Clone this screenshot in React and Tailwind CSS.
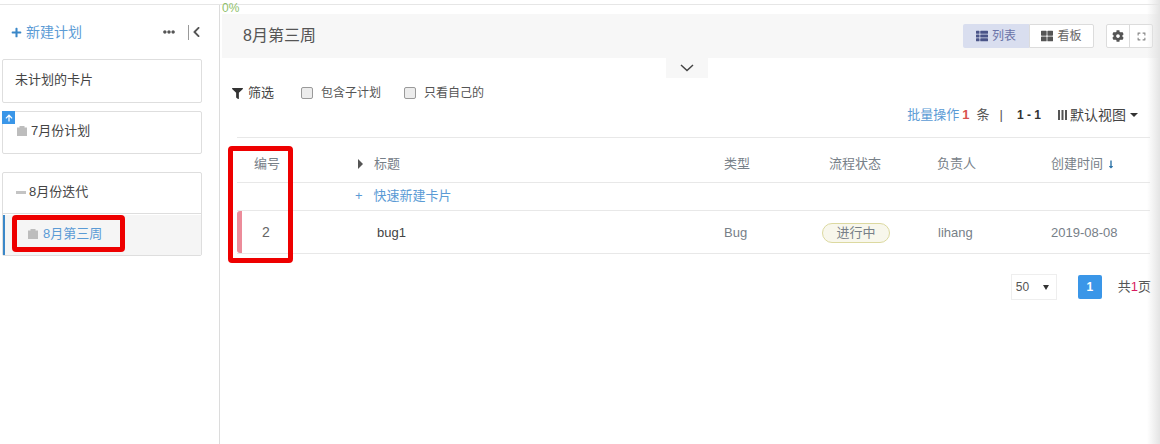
import React from 'react';
import { FaPlus, FaEllipsisH, FaChevronLeft, FaFilter, FaThList, FaThLarge, FaCog, FaExpand, FaArrowUp, FaLongArrowAltDown } from 'react-icons/fa';

const font = { fontFamily: '"Liberation Sans", "Noto Sans CJK SC", sans-serif' };

const Folder = () => (
  <svg className="w-[10px] h-[10px]" viewBox="0 0 10 10" fill="#bdbdbd">
    <path d="M0 1.5h2.5V0h5v1.5H10V10H0z" />
  </svg>
);

const Sidebar = () => (
  <aside className="relative w-[220px] shrink-0 border-r border-[#dcdcdc] pl-[2px] pr-[17px]">
    <div className="flex items-center h-[54px] pl-[9px] text-[14px] text-[#5b9bd5]">
      <FaPlus className="w-[11px] h-[11px] mr-[4px] text-[#3a87c8]" />
      <span>新建计划</span>
      <FaEllipsisH className="w-[12px] h-[12px] ml-auto mr-[13px] text-[#555]" />
      <span className="w-px h-[15px] bg-[#999] mr-[3px]"></span>
      <FaChevronLeft className="w-[9px] h-[12px] mr-[1px] text-[#555]" />
    </div>

    <div className="h-[44px] border border-[#dedede] rounded-[2px] flex items-center pl-[12px] pb-[2px] text-[13px] text-[#444]">未计划的卡片</div>

    <div className="relative mt-[8px] h-[43px] border border-[#dedede] rounded-[2px] flex items-center pl-[14px] pb-[3px] gap-[4px] text-[13px] text-[#444]">
      <span className="absolute left-[-1px] top-[-1px] w-[13px] h-[13px] bg-[#3a96e8] flex items-center justify-center">
        <FaArrowUp className="w-[8px] h-[8px] text-white" />
      </span>
      <Folder />
      <span>7月份计划</span>
    </div>

    <div className="mt-[18px] h-[84px] border border-[#dedede] rounded-[2px] flex flex-col text-[13px]">
      <div className="h-[41px] flex items-center pl-[13px] pb-[2px] gap-[3px] text-[#444] border-b border-[#dedede]">
        <span className="w-[10px] h-[3px] bg-[#c4c4c4]"></span>
        <span>8月份迭代</span>
      </div>
      <div className="mt-[1px] flex-1 bg-[#f5f5f5] border-l-2 border-[#3a87c8] flex items-center pl-[23px] pb-[3px] gap-[5px] text-[#5b9bd5]">
        <Folder />
        <span>8月第三周</span>
      </div>
    </div>

    <div className="absolute left-[12px] top-[210px] w-[113px] h-[37px] border-[5px] border-[#ee0000] rounded-[4px]"></div>
  </aside>
);

const Header = () => (
  <>
    <div className="h-[9px] relative">
      <span className="absolute left-[2px] top-[-3px] text-[12px] leading-[13px] text-[#8fbf6a]">0%</span>
    </div>
    <div className="ml-[2px] h-[44px] bg-[#f7f7f7] flex items-center pl-[21px] pr-[7px]">
      <span className="text-[16px] text-[#555]">8月第三周</span>
      <div className="ml-auto flex items-center text-[12px]">
        <div className="flex h-[24px] w-[66px] items-center justify-center gap-[4px] bg-[#d9deef] rounded-l-[2px] text-[#6a72a8]">
          <FaThList className="w-[12px] h-[12px] text-[#4a5488]" />
          <span>列表</span>
        </div>
        <div className="flex h-[24px] w-[65px] items-center justify-center gap-[4px] bg-white border border-[#dcdcdc] rounded-r-[2px] text-[#666]">
          <FaThLarge className="w-[12px] h-[12px] text-[#555]" />
          <span>看板</span>
        </div>
        <div className="ml-[12px] flex h-[24px] bg-white border border-[#dcdcdc] rounded-[2px]">
          <div className="w-[23px] flex items-center justify-center border-r border-[#dcdcdc]">
            <FaCog className="w-[12px] h-[12px] text-[#555]" />
          </div>
          <div className="w-[22px] flex items-center justify-center">
            <FaExpand className="w-[9px] h-[9px] text-[#888]" />
          </div>
        </div>
      </div>
    </div>
    <div className="flex justify-center pr-[6px]">
      <div className="w-[42px] h-[20px] bg-[#f7f7f7] flex items-center justify-center">
        <svg className="w-[14px] h-[8px]" viewBox="0 0 14 8" fill="none" stroke="#444" strokeWidth="1.5">
          <path d="M1 1l6 5.5L13 1" />
        </svg>
      </div>
    </div>
  </>
);

const Check = ({ label }) => (
  <label className="flex items-center gap-[8px] text-[12px] text-[#555]">
    <span className="w-[12px] h-[12px] rounded-[2px] border border-[#9a9a9a] bg-[#ececec]"></span>
    <span>{label}</span>
  </label>
);

const cols = 'grid grid-cols-[117px_370px_98px_111px_114px_1fr] items-center';

const ListTable = () => (
  <div className="relative ml-[17px] mr-[10px] text-[13px]">
    <div className={`${cols} h-[46px] pt-[8px] border-y border-[#e8e8e8] text-[#778088]`}>
      <div className="pl-[17px]">编号</div>
      <div className="flex items-center">
        <span className="w-0 h-0 border-y-[5px] border-y-transparent border-l-[5px] border-l-[#555] ml-[4px] mr-[11px]"></span>
        标题
      </div>
      <div>类型</div>
      <div className="pl-[7px]">流程状态</div>
      <div className="pl-[4px]">负责人</div>
      <div className="flex items-center pl-[4px]">
        创建时间
        <FaLongArrowAltDown className="w-[8px] h-[9px] ml-[4px] text-[#2f74a8]" />
      </div>
    </div>
    <div className="h-[28px] pb-[2px] border-b border-[#e8e8e8] flex items-center pl-[118px] text-[#5b9bd5]">
      <span className="mr-[11px]">+</span>
      快速新建卡片
    </div>
    <div className={`${cols} h-[43px] border-b border-[#e8e8e8] text-[#778088]`}>
      <div className="flex items-center h-full">
        <span className="w-[5px] h-full bg-[#ec8c9a] rounded-l-[3px]"></span>
        <span className="ml-[20px] pt-[1px] text-[14px] text-[#666]">2</span>
      </div>
      <div className="pl-[23px] pt-[1px] text-[#444]">bug1</div>
      <div className="pt-[1px]">Bug</div>
      <div className="pt-[1px]">
        <span className="inline-flex h-[20px] w-[68px] items-center justify-center rounded-full border border-[#dcd9a0] bg-[#f8f7ec] text-[#778088]">进行中</span>
      </div>
      <div className="pl-[5px] pt-[1px]">lihang</div>
      <div className="pl-[4px] pt-[1px]">2019-08-08</div>
    </div>
    <div className="absolute left-[-9px] top-[9px] w-[65px] h-[117px] border-[5px] border-[#ee0000] rounded-[4px]"></div>
  </div>
);

const App = () => (
  <div style={font} className="relative w-[1160px] h-[444px] overflow-hidden bg-white">
    <div className="h-[5px] border-b border-[#e6e6e6]"></div>
    <div className="flex h-[439px]">
      <Sidebar />
      <main className="flex-1 min-w-0">
        <Header />
        <div className="flex items-center h-[30px] pl-[12px] text-[13px] text-[#444]">
          <FaFilter className="w-[11px] h-[11px] mr-[5px] text-[#333]" />
          <span className="mr-[27px]">筛选</span>
          <Check label="包含子计划" />
          <span className="w-[23px]"></span>
          <Check label="只看自己的" />
        </div>
        <div className="flex items-center justify-end h-[14px] mb-[15px] pr-[22px] text-[13px] text-[#555]">
          <span className="text-[#5b9bd5]">批量操作</span>
          <span className="ml-[3px] font-bold text-[#d9534f]">1</span>
          <span className="ml-[7px]">条</span>
          <span className="ml-[10px]">|</span>
          <span className="ml-[14px] font-bold text-[#333] text-[12px]">1 - 1</span>
          <svg className="ml-[17px] w-[9px] h-[10px]" viewBox="0 0 9 10" fill="#555">
            <path d="M0 0h2v10H0zM3.5 0h2v10h-2zM7 0h2v10H7z" />
          </svg>
          <span className="ml-[3px] text-[14px] text-[#444]">默认视图</span>
          <span className="ml-[4px] w-0 h-0 border-x-[4px] border-x-transparent border-t-[4px] border-t-[#333]"></span>
        </div>
        <ListTable />
        <div className="flex items-center justify-end mt-[20px] pr-[9px] text-[12px] text-[#555]">
          <div className="w-[46px] h-[26px] border border-[#eeeeee] flex items-center justify-between px-[4px]">
            <span>50</span>
            <span className="w-0 h-0 border-x-[3px] border-x-transparent border-t-[5px] border-t-[#333] mr-[3px]"></span>
          </div>
          <div className="ml-[21px] w-[24px] h-[24px] rounded-[2px] bg-[#3a96e8] text-white font-bold flex items-center justify-center">1</div>
          <div className="ml-[16px] text-[13px] whitespace-nowrap">
            共<span className="text-[#d81b60]">1</span>页
          </div>
        </div>
      </main>
    </div>
    <div className="absolute right-0 top-0 bottom-0 w-[13px] bg-gradient-to-r from-transparent to-[#e4e4e4]"></div>
  </div>
);

export default App;
